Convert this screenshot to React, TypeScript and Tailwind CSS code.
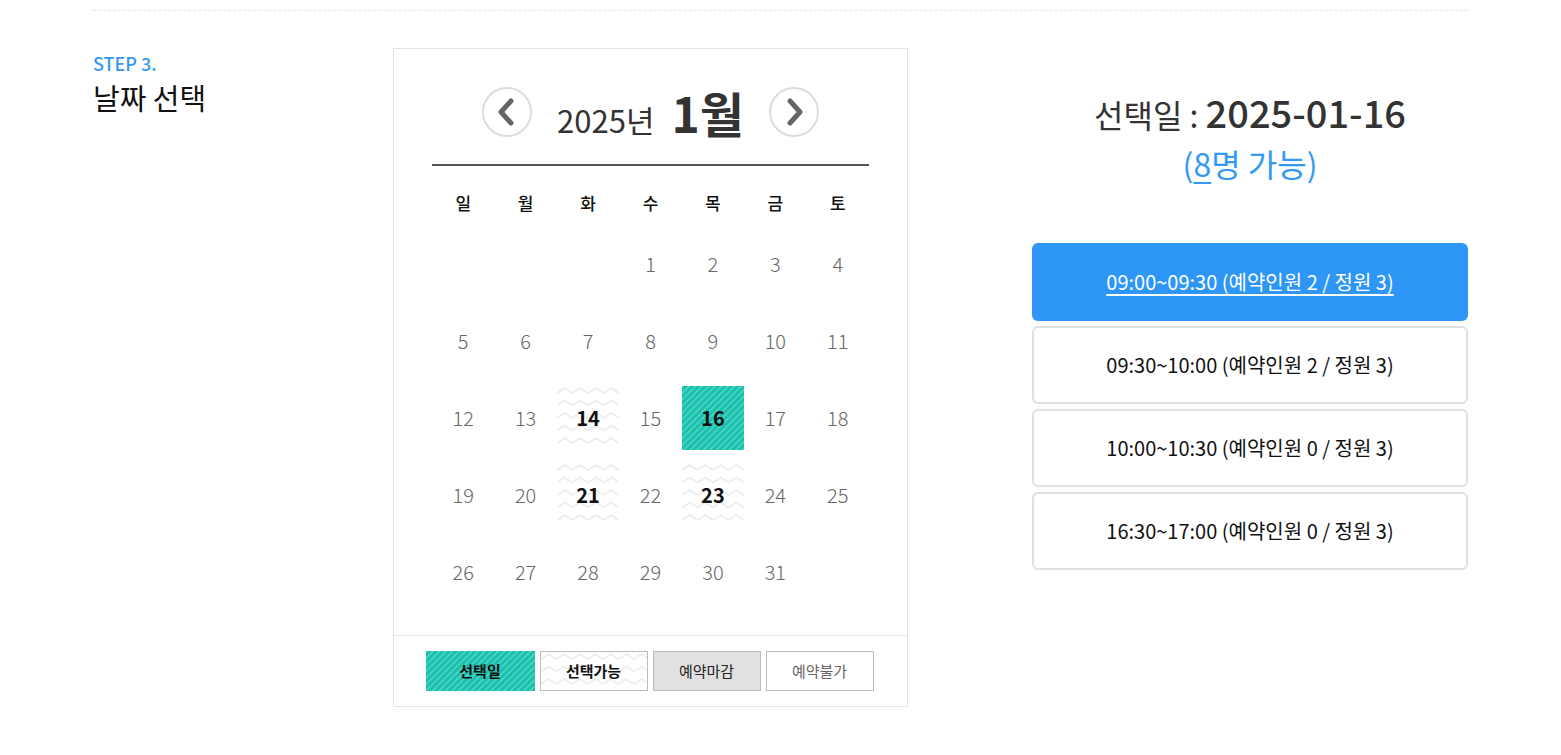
import { useId } from "react";

function Zigzag() {
  const id = useId().replace(/:/g, "");
  return (
    <svg className="absolute inset-0 h-full w-full" aria-hidden="true">
      <defs>
        <pattern id={id} width="15.5" height="12.5" patternUnits="userSpaceOnUse" y="-1">
          <polyline points="0,8 7.75,3 15.5,8" fill="none" stroke="#e8e8e8" strokeWidth="1.5" />
        </pattern>
      </defs>
      <rect width="100%" height="100%" fill={`url(#${id})`} />
    </svg>
  );
}

function Stripes() {
  const id = useId().replace(/:/g, "");
  return (
    <svg className="absolute inset-0 h-full w-full" aria-hidden="true">
      <defs>
        <pattern id={id} width="4.6" height="10" patternUnits="userSpaceOnUse" patternTransform="rotate(45)">
          <rect width="4.6" height="10" fill="#17c2ae" />
          <rect width="1.1" height="10" fill="#6cd9cb" />
        </pattern>
      </defs>
      <rect width="100%" height="100%" fill={`url(#${id})`} />
    </svg>
  );
}

function Chevron({ dir }: { dir: "left" | "right" }) {
  return (
    <svg width="20" height="28" viewBox="0 0 20 28" aria-hidden="true">
      {dir === "left" ? (
        <polyline points="15,3 5,14 15,25" fill="none" stroke="#666" strokeWidth="5" strokeLinecap="round" strokeLinejoin="round" />
      ) : (
        <polyline points="5,3 15,14 5,25" fill="none" stroke="#666" strokeWidth="5" strokeLinecap="round" strokeLinejoin="round" />
      )}
    </svg>
  );
}

type Day = { n: number | null; kind?: "avail" | "selected" };

const weeks: Day[][] = [
  [{ n: null }, { n: null }, { n: null }, { n: 1 }, { n: 2 }, { n: 3 }, { n: 4 }],
  [{ n: 5 }, { n: 6 }, { n: 7 }, { n: 8 }, { n: 9 }, { n: 10 }, { n: 11 }],
  [{ n: 12 }, { n: 13 }, { n: 14, kind: "avail" }, { n: 15 }, { n: 16, kind: "selected" }, { n: 17 }, { n: 18 }],
  [{ n: 19 }, { n: 20 }, { n: 21, kind: "avail" }, { n: 22 }, { n: 23, kind: "avail" }, { n: 24 }, { n: 25 }],
  [{ n: 26 }, { n: 27 }, { n: 28 }, { n: 29 }, { n: 30 }, { n: 31 }, { n: null }],
];

const weekdays = ["일", "월", "화", "수", "목", "금", "토"];

const slots = [
  "09:00~09:30 (예약인원 2 / 정원 3)",
  "09:30~10:00 (예약인원 2 / 정원 3)",
  "10:00~10:30 (예약인원 0 / 정원 3)",
  "16:30~17:00 (예약인원 0 / 정원 3)",
];

export default function App() {
  return (
    <div className="min-h-screen bg-white font-['Noto_Sans_CJK_KR','Noto_Sans',sans-serif]">
      <div className="mx-auto w-[1375px] pt-[10px]">
        <div className="border-t border-dashed border-[#e5e5e5]" />
        <div className="mt-[37px] flex items-start">
          {/* Left title */}
          <div className="w-[300px] pt-[2px]">
            <div className="text-[18px] font-medium leading-[26px] text-[#3399f3]">STEP 3.</div>
            <div className="mt-[2px] text-[29px] font-normal leading-[38px] text-[#111]">날짜 선택</div>
          </div>

          {/* Calendar */}
          <div className="w-[515px] border border-[#e5e5e5] bg-white">
            <div className="px-[38px] pt-[38px] pb-[25px]">
              <div className="flex h-[50px] items-center justify-center gap-[25px]">
                <button className="flex h-[50px] w-[50px] items-center justify-center rounded-full border-2 border-[#dcdcdc] bg-white pr-[2px]">
                  <Chevron dir="left" />
                </button>
                <div className="flex items-baseline text-[#333]">
                  <span className="text-[31px] leading-none">2025년</span>
                  <span className="ml-[17px] text-[48px] font-bold leading-none">1월</span>
                </div>
                <button className="flex h-[50px] w-[50px] items-center justify-center rounded-full border-2 border-[#dcdcdc] bg-white pl-[2px]">
                  <Chevron dir="right" />
                </button>
              </div>
              <div className="mt-[27px] h-[2px] bg-[#555]" />
              <div className="mt-[15px] grid h-[44px] grid-cols-7 items-center text-center text-[17px] font-medium text-[#111]">
                {weekdays.map((w) => (
                  <div key={w}>{w}</div>
                ))}
              </div>
              <div className="grid grid-cols-7">
                {weeks.flat().map((d, i) => (
                  <div key={i} className="flex h-[77px] items-center">
                    {d.n !== null && (
                      <div className="relative flex h-[64px] w-full items-center justify-center">
                        {d.kind === "avail" && <Zigzag />}
                        {d.kind === "selected" && <Stripes />}
                        <span
                          className={
                            d.kind
                              ? "relative text-[20px] font-bold text-[#111]"
                              : "relative text-[20px] font-light text-[#666]"
                          }
                        >
                          {d.n}
                        </span>
                      </div>
                    )}
                  </div>
                ))}
              </div>
            </div>
            <div className="flex justify-center gap-[5px] border-t border-[#e5e5e5] pt-[15px] pb-[15px] pr-[2px]">
              <div className="relative flex h-[40px] w-[109px] items-center justify-center">
                <Stripes />
                <span className="relative text-[15px] font-bold text-[#111]">선택일</span>
              </div>
              <div className="relative flex h-[40px] w-[108px] items-center justify-center border border-[#bbb] bg-white">
                <Zigzag />
                <span className="relative text-[15px] font-bold text-[#111]">선택가능</span>
              </div>
              <div className="flex h-[40px] w-[108px] items-center justify-center border border-[#bbb] bg-[#e1e1e1]">
                <span className="text-[15px] text-[#222]">예약마감</span>
              </div>
              <div className="flex h-[40px] w-[108px] items-center justify-center border border-[#bbb] bg-white">
                <span className="text-[15px] text-[#666]">예약불가</span>
              </div>
            </div>
          </div>

          {/* Right panel */}
          <div className="ml-[124px] w-[436px] pt-[39px] text-center">
            <div className="flex h-[50px] items-baseline justify-center text-[#333]">
              <span className="text-[32px] leading-[50px]">선택일 :&nbsp;</span>
              <span className="text-[38px] font-medium leading-[50px]">2025-01-16</span>
            </div>
            <div className="mt-[3px] text-[32px] leading-[46px] text-[#3399f3]">
              (<span className="underline decoration-[2px] underline-offset-[5px]">8</span>명 가능)
            </div>
            <div className="mt-[57px] flex flex-col gap-[5px]">
              {slots.map((s, i) =>
                i === 0 ? (
                  <button
                    key={s}
                    className="flex h-[78px] w-full items-center justify-center rounded-[6px] bg-[#2d96f6] text-[20px] text-white underline underline-offset-[4px]"
                  >
                    {s}
                  </button>
                ) : (
                  <button
                    key={s}
                    className="flex h-[78px] w-full items-center justify-center rounded-[6px] border-2 border-[#e0e0e0] bg-white text-[20px] text-[#111]"
                  >
                    {s}
                  </button>
                )
              )}
            </div>
          </div>
        </div>
      </div>
    </div>
  );
}
